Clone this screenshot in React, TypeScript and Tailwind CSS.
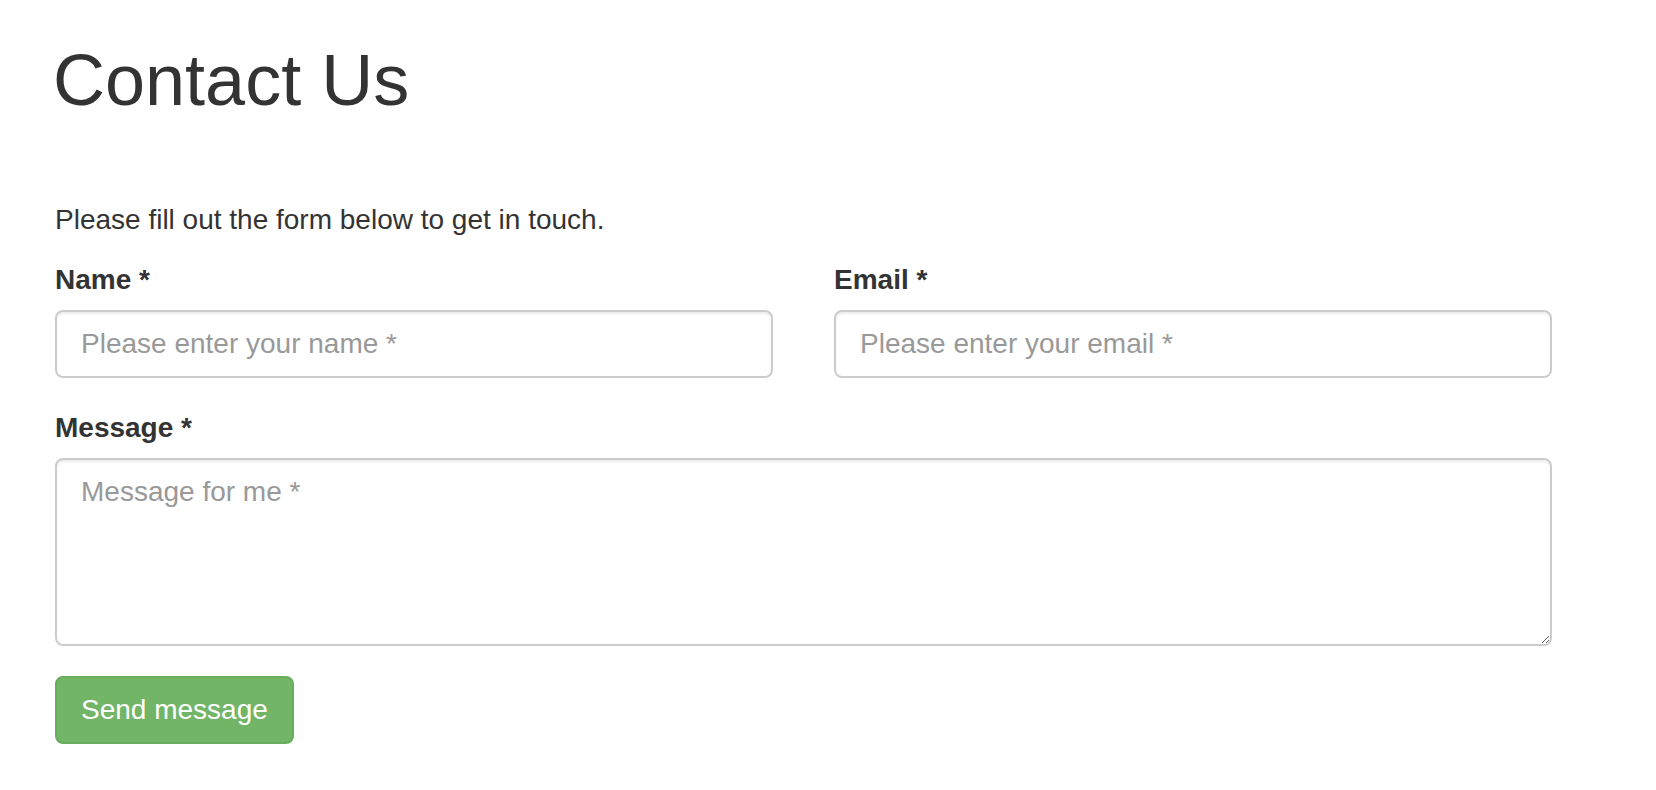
export default function App() {
  return (
    <div
      className="min-h-screen bg-white pl-[55px] pt-[41px] text-[#333333] text-[28px] leading-[40px]"
      style={{ fontFamily: '"Liberation Sans", Arial, Helvetica, sans-serif' }}
    >
      <div className="w-[1497px]">
        <h1 className="mb-[80px] -ml-[2px] text-[72px] leading-[1.1] font-normal">
          Contact Us
        </h1>

        <p className="mb-[20px]">Please fill out the form below to get in touch.</p>

        <form onSubmit={(e) => e.preventDefault()}>
          <div className="grid grid-cols-2 gap-x-[61px]">
            <div className="mb-[30px]">
              <label htmlFor="name" className="mb-[10px] inline-block font-bold">
                Name *
              </label>
              <input
                id="name"
                type="text"
                placeholder="Please enter your name *"
                className="block h-[68px] w-full rounded-[8px] border-2 border-[#cccccc] px-[24px] py-[12px] text-[28px] leading-[40px] text-[#555555] shadow-[inset_0_2px_2px_rgba(0,0,0,0.075)] outline-none placeholder:text-[#999999]"
              />
            </div>
            <div className="mb-[30px]">
              <label htmlFor="email" className="mb-[10px] inline-block font-bold">
                Email *
              </label>
              <input
                id="email"
                type="email"
                placeholder="Please enter your email *"
                className="block h-[68px] w-full rounded-[8px] border-2 border-[#cccccc] px-[24px] py-[12px] text-[28px] leading-[40px] text-[#555555] shadow-[inset_0_2px_2px_rgba(0,0,0,0.075)] outline-none placeholder:text-[#999999]"
              />
            </div>
          </div>

          <div className="mb-[30px]">
            <label htmlFor="message" className="mb-[10px] inline-block font-bold">
              Message *
            </label>
            <textarea
              id="message"
              rows={4}
              placeholder="Message for me *"
              className="block h-[188px] w-full resize-y rounded-[8px] border-2 border-[#cccccc] px-[24px] py-[12px] text-[28px] leading-[40px] text-[#555555] shadow-[inset_0_2px_2px_rgba(0,0,0,0.075)] outline-none placeholder:text-[#999999]"
            />
          </div>

          <button
            type="submit"
            className="h-[68px] rounded-[8px] border-2 border-[#68ad5c] bg-[#72b566] px-[24px] text-[28px] leading-[40px] text-white"
          >
            Send message
          </button>
        </form>
      </div>
    </div>
  );
}
